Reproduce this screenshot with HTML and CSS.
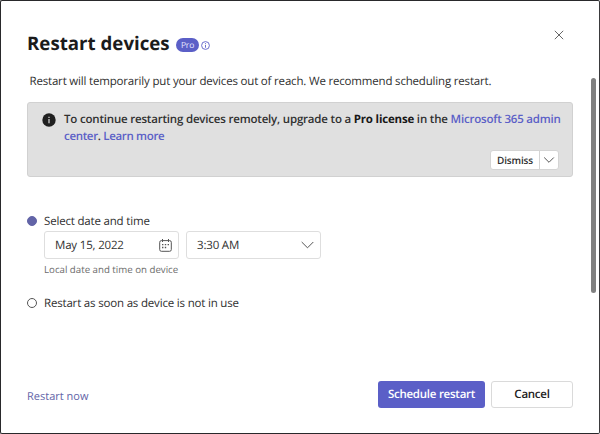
FILE: index.html
```
<!DOCTYPE html>
<html lang="en">
<head>
<meta charset="utf-8">
<title>Restart devices</title>
<link rel="stylesheet" href="styles.css">
</head>
<body>
<main class="dialog">
  <div class="content">
    <header class="header">
      <h1 class="title">Restart devices</h1>
      <span class="pro">Pro</span>
      <svg class="info" width="9" height="9" viewBox="0 0 9 9"><circle cx="4.5" cy="4.5" r="3.9"/><path d="M4.5 4v2.700M4.5 2.2v1"/></svg>
      <svg class="close" width="10" height="10" viewBox="0 0 10 10"><path d="M.8.8l8.4 8.4M9.2.8L.8 9.2"/></svg>
    </header>
    <p class="intro">Restart will temporarily put your devices out of reach. We recommend scheduling restart.</p>
    <section class="banner">
      <svg class="banner-icon" width="14" height="14" viewBox="0 0 14 14"><circle cx="7" cy="7" r="6.7"/><path d="M7 6v4.2M7 3.7v1.2"/></svg>
      <div class="banner-body">
        <p class="message"><span>To continue restarting devices remotely, upgrade to a <b>Pro license</b> in the <a>Microsoft 365 admin</a></span><br><span class="line2"><a>center</a>. <a>Learn more</a></span></p>
        <div class="split"><span class="dismiss">Dismiss</span><span class="more"><svg width="12" height="8" viewBox="0 0 12 8"><path d="M1.200 1.5l4.800 4.800 4.800-4.800"/></svg></span></div>
      </div>
    </section>
    <section class="options">
      <div class="option"><span class="radio checked"></span><span class="label">Select date and time</span></div>
      <div class="fields">
        <div class="field"><span class="value">May 15, 2022</span>
          <svg class="calendar" width="13" height="13" viewBox="0 0 13 13"><rect x=".7" y="1.6" width="11.6" height="10.7" rx="1.7"/><path d="M3.5 0v3M9.5 0v3"/><path class="dots" d="M5.8 5.7h1.4M8.6 5.7h1.4M3 8.5h1.4M5.8 8.5h1.4M3 5.7h1.4"/></svg>
        </div>
        <div class="field"><span class="value">3:30 AM</span>
          <svg class="chevron" width="13" height="8" viewBox="0 0 13 8"><path d="M.7 1l5.8 5.8L12.300 1"/></svg>
        </div>
      </div>
      <p class="hint">Local date and time on device</p>
      <div class="option"><span class="radio"></span><span class="label">Restart as soon as device is not in use</span></div>
    </section>
    <footer class="footer">
      <a class="now">Restart now</a>
      <span class="button primary">Schedule restart</span>
      <span class="button cancel">Cancel</span>
    </footer>
  </div>
  <div class="scrollbar"></div>
</main>
</body>
</html>
```
FILE: styles.css
```
* { box-sizing: border-box; }
body { margin: 0; font: 11.5px/16px "Open Sans", "Noto Sans", sans-serif; letter-spacing: -.18px; color: #303030; background: #fff; text-rendering: geometricPrecision; }
h1, p { margin: 0; }
svg { display: block; flex: none; fill: none; stroke: #555; }
span, a { white-space: nowrap; }
.dialog { display: flex; height: 434px; border: 1px solid #29292b; border-right-color: #3a3a3c; border-radius: 2px; }
.content { width: 546px; margin-left: 26px; height: 432px; display: flex; flex-direction: column; }
.header { display: flex; align-items: center; height: 26px; margin-top: 29px; }
.title { width: 149px; padding-top: 2px; font-size: 18.700px; letter-spacing: 0; line-height: 26px; font-weight: 700; color: #1b1b1b; white-space: nowrap; }
.pro { width: 23px; height: 14px; margin-top: 4px; border-radius: 7px; background: #5b5fc7; color: #e6e6ff; font-size: 8.500px; line-height: 15px; text-align: center; }
.info { margin: 4px 0 0 2px; stroke: #5b5fc7; stroke-width: .9; }
.close { margin: -16px 9px 0 auto; stroke: #666; stroke-width: 1; }
.intro { margin: 18px 0 0 2.500px; white-space: nowrap; }
.banner { display: flex; height: 75px; margin-top: 12px; padding: 8px 13px 0 14px; border: 1px solid #d1d1d1; border-radius: 3px; background: #e0e0e0; }
.banner-icon { margin-top: 2px; fill: #202020; stroke: none; }
.banner-icon path { stroke: #ddd; stroke-width: 1.2; }
.banner-body { flex: 1; min-width: 0; margin-left: 8px; display: flex; flex-direction: column; }
.message { line-height: 17px; font-weight: 600; letter-spacing: -.19px; white-space: nowrap; }
.message b { font-weight: 700; color: #181818; }
.message a { color: #5b5fc7; }
.line2 { letter-spacing: -.33px; }
.split { display: flex; align-self: flex-end; margin-top: 5px; height: 20px; border: 1px solid #d4d4d4; border-radius: 3px; background: #fff; }
.dismiss { width: 49px; font-size: 10px; line-height: 18px; text-align: center; font-weight: 600; border-right: 1px solid #d4d4d4; }
.more { width: 18px; display: flex; align-items: center; justify-content: center; }
.options { margin-top: 36px; }
.option { display: flex; align-items: center; height: 16px; }
.label { padding-top: 1px; }
.value { padding-top: 1px; }
.radio { width: 10px; height: 10px; margin-right: 7px; border: 1px solid #555; border-radius: 50%; }
.radio.checked { background: #6264a7; border-color: #6264a7; }
.fields { display: flex; gap: 7px; margin: 2px 0 0 17px; }
.field { display: flex; align-items: center; justify-content: space-between; width: 135px; height: 28px; padding: 0 6px 0 10px; border: 1px solid #dedede; border-radius: 3px; }
.calendar .dots { stroke-width: 1.3; }
.hint { margin: 3px 0 0 17px; font-size: 9.700px; letter-spacing: 0; color: #6c6c6c; white-space: nowrap; }
.hint + .option { margin-top: 17px; }
.hint + .option .label { padding-top: 2px; }
.footer { display: flex; align-items: center; margin: auto 0 25px; height: 28px; }
.now { margin: 6px auto 0 0; font-size: 11px; letter-spacing: 0; color: #6264a7; }
.button { height: 27px; line-height: 27px; border-radius: 3px; text-align: center; font-weight: 600; letter-spacing: -.25px; }
.primary { width: 107px; background: #5b5fc7; color: #fff; }
.cancel { width: 82px; margin-left: 6px; border: 1px solid #dadada; line-height: 25px; color: #222; }
.scrollbar { width: 5px; height: 215px; margin: 77px 0 0 18px; border-radius: 3px; background: #808080; }
```
